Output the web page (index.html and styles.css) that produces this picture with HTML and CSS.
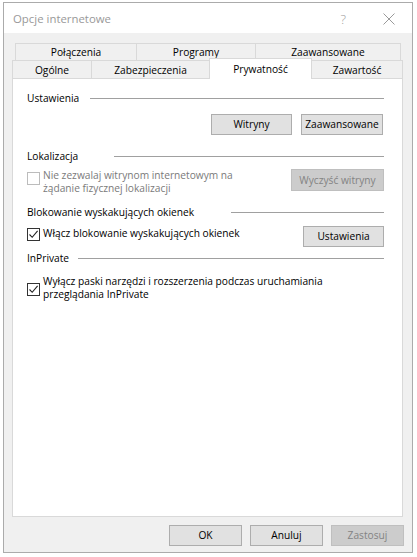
FILE: index.html
```html
<!DOCTYPE html>
<html lang="pl">
<head>
<meta charset="utf-8">
<title>Opcje internetowe</title>
<link rel="stylesheet" href="styles.css">
</head>
<body>
<div class="window">
  <div class="titlebar">
    <span class="title">Opcje internetowe</span>
    <span class="help">?</span>
    <svg class="close" width="12" height="12" viewBox="0 0 12 12"><path d="M0.5 0.5 L11.5 11.5 M11.5 0.5 L0.5 11.5" stroke="#9a9a9a" stroke-width="1" fill="none"/></svg>
  </div>
  <div class="client">
    <div class="tabs">
      <div class="tabrow row1">
        <div class="tab w-pol">Połączenia</div>
        <div class="tab w-prog">Programy</div>
        <div class="tab w-zaaw">Zaawansowane</div>
      </div>
      <div class="tabrow row2">
        <div class="tab w-ogol">Ogólne</div>
        <div class="tab w-zab">Zabezpieczenia</div>
        <div class="tab w-pryw selected">Prywatność</div>
        <div class="tab w-zaw">Zawartość</div>
      </div>
    </div>
    <div class="panel">
      <div class="group g1"><span>Ustawienia</span><i class="rule r1"></i></div>
      <div class="btnrow">
        <button class="btn b-witr">Witryny</button>
        <button class="btn b-zaaw">Zaawansowane</button>
      </div>

      <div class="group g2"><span>Lokalizacja</span><i class="rule r2"></i></div>
      <div class="optrow o-lok">
        <span class="check disabled cb-lok"></span>
        <div class="label disabled">
          <div class="ln">Nie zezwalaj witrynom internetowym na</div>
          <div class="ln">żądanie fizycznej lokalizacji</div>
        </div>
        <button class="btn disabled b-wycz" disabled>Wyczyść witryny</button>
      </div>

      <div class="group g3"><span>Blokowanie wyskakujących okienek</span><i class="rule r3"></i></div>
      <div class="optrow o-blok">
        <span class="check cb-blok"><svg width="11" height="11" viewBox="0 0 11 11"><path d="M1.5 5.5 L4.2 8.3 L9.6 1.8" stroke="#222" stroke-width="1.1" fill="none"/></svg></span>
        <div class="label l-blok"><div class="ln">Włącz blokowanie wyskakujących okienek</div></div>
        <button class="btn b-ust">Ustawienia</button>
      </div>

      <div class="group g4"><span>InPrivate</span><i class="rule r4"></i></div>
      <div class="optrow o-priv">
        <span class="check cb-priv"><svg width="11" height="11" viewBox="0 0 11 11"><path d="M1.5 5.5 L4.2 8.3 L9.6 1.8" stroke="#222" stroke-width="1.1" fill="none"/></svg></span>
        <div class="label">
          <div class="ln">Wyłącz paski narzędzi i rozszerzenia podczas uruchamiania</div>
          <div class="ln">przeglądania InPrivate</div>
        </div>
      </div>
    </div>
    <div class="footer">
      <button class="btn fbtn">OK</button>
      <button class="btn fbtn">Anuluj</button>
      <button class="btn fbtn disabled" disabled>Zastosuj</button>
    </div>
  </div>
</div>
</body>
</html>
```
FILE: styles.css
```css
* { box-sizing: border-box; }
html, body { margin: 0; padding: 0; background: #ffffff; }
body {
  font-family: "Open Sans", "Noto Sans", "DejaVu Sans", sans-serif;
  font-size: 10.2px;
  color: #000;
  width: 417px;
  height: 557px;
  overflow: hidden;
}
.window {
  margin: 2px 0 0 3px;
  width: 410px;
  height: 551px;
  border: 1px solid #ababab;
  background: #f0f0f0;
  display: flex;
  flex-direction: column;
}
.titlebar {
  height: 30px;
  background: #ffffff;
  display: flex;
  align-items: center;
  padding-left: 9px;
  flex: none;
}
.title {
  font-size: 11.4px;
  color: #999999;
  margin-top: 1px;
}
.help {
  margin-left: auto;
  font-size: 13px;
  color: #9a9a9a;
  font-weight: 300;
  margin-top: 1px;
}
.close {
  margin-left: 37px;
  margin-right: 17px;
  margin-top: 1px;
}
.client {
  flex: 1;
  padding: 10px 9px 0 8px;
}
.tabs { display: flex; flex-direction: column; }
.tabrow { display: flex; align-items: flex-start; }
.row1 { height: 17px; padding-left: 3px; }
.row2 { height: 18px; }
.tab {
  border: 1px solid #d9d9d9;
  border-bottom: none;
  background: #f0f0f0;
  display: flex;
  align-items: center;
  justify-content: center;
  white-space: nowrap;
  line-height: 13px;
}
.tab + .tab { margin-left: -1px; }
.row1 .tab { height: 17px; padding-top: 1px; }
.row2 .tab { height: 18px; padding-top: 2px; }
.w-pol { width: 122px; }
.w-prog { width: 120px; }
.w-zaaw { width: 146px; }
.w-ogol { width: 80px; }
.w-zab { width: 119px; }
.w-pryw { width: 103px; }
.w-zaw { width: 92px; }
.row2 .tab.selected {
  background: #ffffff;
  height: 21px;
  margin-top: -2px;
  padding-top: 0;
  position: relative;
  z-index: 2;
}
.panel {
  position: relative;
  z-index: 1;
  height: 439px;
  background: #ffffff;
  border: 1px solid #d9d9d9;
  padding: 13px 18px 0 14px;
  display: flex;
  flex-direction: column;
}
.group {
  height: 13px;
  line-height: 13px;
  display: flex;
  align-items: center;
  white-space: nowrap;
}
.rule {
  display: block;
  margin-left: auto;
  height: 1px;
  background: #a0a0a0;
}
.r1 { width: 294px; }
.r2 { width: 270px; }
.r3 { width: 153px; }
.r4 { width: 306px; }
.btn {
  font-family: inherit;
  font-size: 10.2px;
  color: #000;
  background: #e1e1e1;
  border: 1px solid #adadad;
  height: 21px;
  padding: 0;
  line-height: 17px;
  border-radius: 0;
}
.btn.disabled {
  background: #cccccc;
  border-color: #bfbfbf;
  color: #838383;
}
.btnrow {
  margin-top: 9px;
  display: flex;
  justify-content: flex-end;
  gap: 9px;
  padding-right: 1px;
}
.b-witr { width: 81px; }
.b-zaaw { width: 82px; }
.g2 { margin-top: 15px; }
.g3 { margin-top: 11px; }
.g4 { margin-top: 5px; }
.optrow {
  display: flex;
  align-items: flex-start;
}
.o-lok { margin-top: 6px; height: 26px; }
.o-blok { margin-top: 7px; height: 21px; }
.o-priv { margin-top: 10px; }
.check {
  flex: none;
  width: 13px;
  height: 13px;
  border: 1px solid #333333;
  background: #ffffff;
  display: flex;
  align-items: center;
  justify-content: center;
}
.check.disabled { border-color: #bcbcbc; }
.label {
  margin-left: 3px;
  white-space: nowrap;
}
.ln {
  height: 13px;
  line-height: 13px;
}
.label.disabled { color: #7a7a7a; }
.cb-lok { margin-top: 3px; }
.b-wycz { margin-left: auto; width: 93px; height: 22px; }
.cb-blok { margin-top: 2px; }
.l-blok { margin-top: 1px; }
.b-ust { margin-left: auto; width: 81px; }
.cb-priv { margin-top: 8px; }
.footer {
  margin-top: 8px;
  margin-right: -1px;
  display: flex;
  justify-content: flex-end;
  gap: 8px;
}
.fbtn { width: 73px; }
```
